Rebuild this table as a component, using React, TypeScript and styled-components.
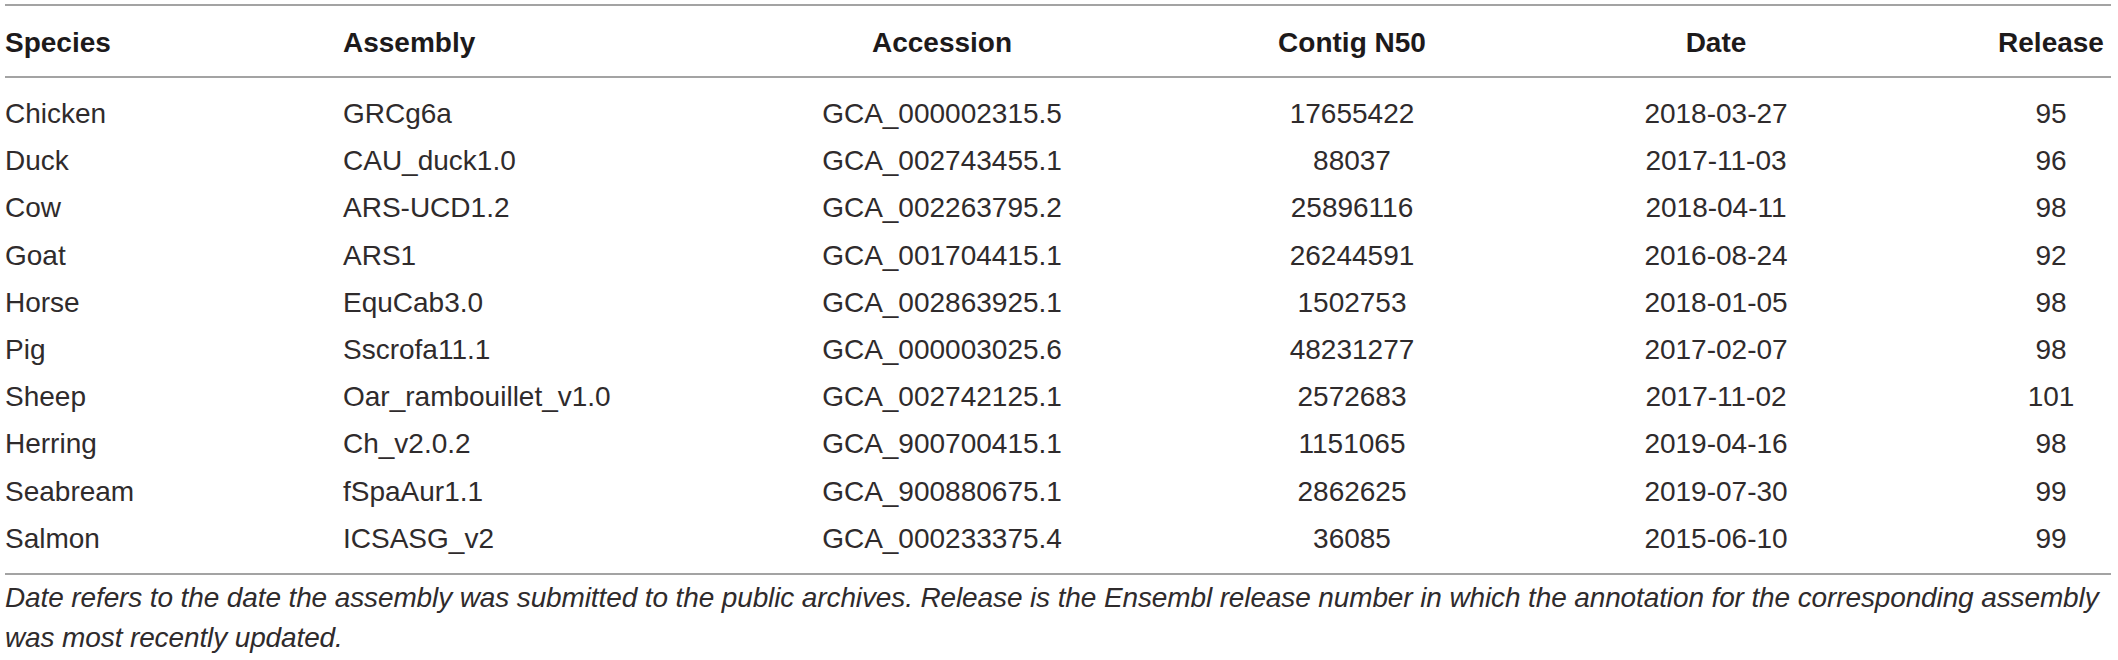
import React from "react";
import styled, { createGlobalStyle } from "styled-components";

const GlobalStyle = createGlobalStyle`
  html, body {
    margin: 0;
    padding: 0;
    background: #ffffff;
  }
  body {
    font-family: "Liberation Sans", Arial, Helvetica, sans-serif;
    color: #231f20;
  }
`;

const COLS = "338px 278px 642px 178px 550px 120px";

const Page = styled.div`
  padding: 4px 7px 0 5px;
  width: 2106px;
`;

const Table = styled.div`
  border-top: 2px solid #a3a3a3;
  border-bottom: 2px solid #a3a3a3;
`;

const HeadRow = styled.div`
  display: grid;
  grid-template-columns: ${COLS};
  padding: 13px 0 10px;
  border-bottom: 2px solid #a3a3a3;
`;

const Body = styled.div`
  padding: 12px 0 11px;
`;

const Row = styled.div`
  display: grid;
  grid-template-columns: ${COLS};
  height: 47.2px;
`;

type Align = "left" | "center";

const HeadCell = styled.div<{ $align: Align }>`
  font-size: 28px;
  line-height: 47px;
  font-weight: 700;
  color: #1d1a1b;
  white-space: nowrap;
  text-align: ${(p) => p.$align};
`;

const Cell = styled.div<{ $align: Align }>`
  font-size: 28px;
  line-height: 47.2px;
  font-weight: 400;
  color: #2f2b2c;
  white-space: nowrap;
  text-align: ${(p) => p.$align};
`;

const Caption = styled.p`
  margin: 0;
  padding-top: 3px;
  font-size: 28px;
  line-height: 40px;
  font-style: italic;
  letter-spacing: -0.12px;
  color: #2f2b2c;
  width: 2112px;
`;

const headers: { label: string; align: Align }[] = [
  { label: "Species", align: "left" },
  { label: "Assembly", align: "left" },
  { label: "Accession", align: "center" },
  { label: "Contig N50", align: "center" },
  { label: "Date", align: "center" },
  { label: "Release", align: "center" },
];

const rows: string[][] = [
  ["Chicken", "GRCg6a", "GCA_000002315.5", "17655422", "2018-03-27", "95"],
  ["Duck", "CAU_duck1.0", "GCA_002743455.1", "88037", "2017-11-03", "96"],
  ["Cow", "ARS-UCD1.2", "GCA_002263795.2", "25896116", "2018-04-11", "98"],
  ["Goat", "ARS1", "GCA_001704415.1", "26244591", "2016-08-24", "92"],
  ["Horse", "EquCab3.0", "GCA_002863925.1", "1502753", "2018-01-05", "98"],
  ["Pig", "Sscrofa11.1", "GCA_000003025.6", "48231277", "2017-02-07", "98"],
  ["Sheep", "Oar_rambouillet_v1.0", "GCA_002742125.1", "2572683", "2017-11-02", "101"],
  ["Herring", "Ch_v2.0.2", "GCA_900700415.1", "1151065", "2019-04-16", "98"],
  ["Seabream", "fSpaAur1.1", "GCA_900880675.1", "2862625", "2019-07-30", "99"],
  ["Salmon", "ICSASG_v2", "GCA_000233375.4", "36085", "2015-06-10", "99"],
];

export default function App() {
  return (
    <>
      <GlobalStyle />
      <Page>
        <Table>
          <HeadRow>
            {headers.map((h) => (
              <HeadCell key={h.label} $align={h.align}>
                {h.label}
              </HeadCell>
            ))}
          </HeadRow>
          <Body>
            {rows.map((r) => (
              <Row key={r[0]}>
                {r.map((v, i) => (
                  <Cell key={i} $align={headers[i].align}>
                    {v}
                  </Cell>
                ))}
              </Row>
            ))}
          </Body>
        </Table>
        <Caption>
          Date refers to the date the assembly was submitted to the public archives. Release is the
          Ensembl release number in which the annotation for the corresponding assembly was most
          recently updated.
        </Caption>
      </Page>
    </>
  );
}
